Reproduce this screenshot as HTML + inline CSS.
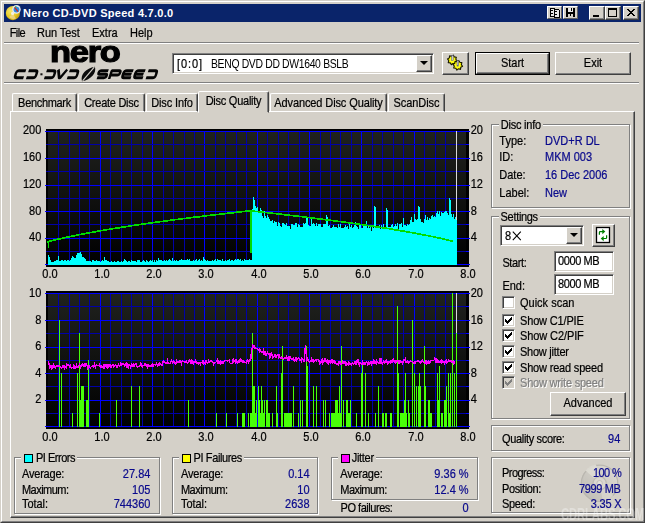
<!DOCTYPE html>
<html><head><meta charset="utf-8"><title>Nero CD-DVD Speed 4.7.0.0</title>
<style>
*{box-sizing:border-box;margin:0;padding:0}
html,body{width:645px;height:523px;overflow:hidden;background:#D4D0C8}
body{position:relative;font-family:"Liberation Sans",sans-serif;font-size:11px;color:#000;line-height:13px}
.a{position:absolute;white-space:nowrap}
.v{color:#0A0A8C}
.r{text-align:right}
.t{display:inline-block;transform:scaleY(1.1);-webkit-text-stroke:0.2px currentColor}
#win{left:0;top:0;width:645px;height:523px;border:1px solid;border-color:#D4D0C8 #404040 #404040 #D4D0C8}
#win2{left:1px;top:1px;width:643px;height:521px;border:1px solid;border-color:#FFFFFF #808080 #808080 #FFFFFF}
#title{left:4px;top:4px;width:637px;height:18px;background:#0A246A}
#ttext{left:23px;top:6px;color:#fff;font-weight:bold;font-size:11px;line-height:14px;}
.cap{top:6px;width:16px;height:14px;background:#D4D0C8;border:1px solid;border-color:#fff #404040 #404040 #fff;box-shadow:inset -1px -1px 0 #808080}
.hsep{height:2px;border-top:1px solid #808080;border-bottom:1px solid #fff}
.btn{background:#D4D0C8;border:1px solid;border-color:#fff #404040 #404040 #fff;box-shadow:inset -1px -1px 0 #808080, inset 1px 1px 0 #D4D0C8;text-align:center}
.sunk{background:#fff;border:1px solid;border-color:#808080 #fff #fff #808080;box-shadow:inset 1px 1px 0 #404040, inset -1px -1px 0 #D4D0C8}
.grp{border:1px solid #808080;box-shadow:1px 1px 0 #fff, inset 1px 1px 0 #fff}
.glab{background:#D4D0C8;padding:0 2px}
.tab{height:19px;top:93px;border:1px solid;border-color:#fff #404040 transparent #fff;border-radius:2px 2px 0 0;box-shadow:inset -1px 0 0 #808080;text-align:center;padding-top:3px}
.cb{width:13px;height:13px}
.sw{width:9px;height:9px;border:1px solid #000}
</style></head><body>
<div class="a" id="win"></div><div class="a" id="win2"></div>
<div class="a" id="title"></div>
<svg class="a" style="left:5px;top:4px" width="18" height="18" viewBox="0 0 18 18">
 <defs><radialGradient id="yg" cx="0.35" cy="0.35" r="0.75"><stop offset="0" stop-color="#F6E870"/><stop offset="0.6" stop-color="#E6C81E"/><stop offset="1" stop-color="#B89410"/></radialGradient></defs>
 <circle cx="7.9" cy="9.1" r="7.1" fill="url(#yg)"/><path d="M4,13 A6 6 0 0 0 11,14.5 L8,10 Z" fill="#F0D8A0" opacity="0.7"/><circle cx="7.6" cy="9.4" r="1.6" fill="#F4F0E0"/>
 <circle cx="11.4" cy="5.4" r="4.3" fill="#E4E6EC"/><circle cx="11.5" cy="5.6" r="2.9" fill="#2E8AE0"/><path d="M9.6,3.4 L13,7.6" stroke="#D02818" stroke-width="1.3"/><path d="M10.2,3 L11.4,2.4" stroke="#40B040" stroke-width="1.2"/>
</svg>
<div class="a" id="ttext" style="letter-spacing:0.27px;">Nero CD-DVD Speed 4.7.0.0</div>
<!-- title bar small icons -->
<div class="a" style="left:547px;top:6px;width:15px;height:13px;background:#D4D0C8;border:1px solid;border-color:#fff #606060 #606060 #fff"></div>
<div class="a" style="left:563px;top:6px;width:15px;height:13px;background:#D4D0C8;border:1px solid;border-color:#fff #606060 #606060 #fff"></div>
<svg class="a" style="left:547px;top:6px" width="32" height="13" viewBox="0 0 32 13" shape-rendering="crispEdges">
 <path d="M3 2 H7 L8 3 V10 H3 Z" fill="#E8E8E8" stroke="#000" stroke-width="1"/>
 <path d="M7 3 H11 L12 4 V11 H7 Z" fill="#E8E8E8" stroke="#000" stroke-width="1"/>
 <rect x="4" y="4" width="2" height="1" fill="#000"/><rect x="4" y="7" width="2" height="1" fill="#000"/>
 <rect x="8" y="5" width="2" height="1" fill="#000"/><rect x="8" y="8" width="2" height="1" fill="#000"/>
 <rect x="19" y="2" width="9" height="9" fill="#000"/>
 <rect x="21" y="2" width="5" height="4" fill="#E8E8E8"/><rect x="24" y="2" width="1" height="3" fill="#000"/>
 <rect x="21" y="8" width="5" height="3" fill="#D4D0C8"/><rect x="23" y="8" width="1" height="2" fill="#000"/>
</svg>
<div class="a cap" style="left:589px"><div class="a" style="left:3px;top:8px;width:6px;height:2px;background:#000"></div></div>
<div class="a cap" style="left:605px"><div class="a" style="left:2px;top:1px;width:9px;height:9px;border:1px solid #000;border-top-width:2px"></div></div>
<div class="a cap" style="left:623px"><svg class="a" style="left:3px;top:2px" width="8" height="7" viewBox="0 0 8 7"><path d="M0 0 L7 7 M1 0 L8 7 M7 0 L0 7 M8 0 L1 7" stroke="#000" stroke-width="1" shape-rendering="crispEdges"/></svg></div>
<!-- menu -->
<div class="a t" style="letter-spacing:-0.58px;left:9.7px;top:26.7px">File</div>
<div class="a t" style="letter-spacing:-0.05px;left:37px;top:26.7px">Run Test</div>
<div class="a t" style="left:92px;top:26.7px">Extra</div>
<div class="a t" style="left:130px;top:26.7px">Help</div>
<div class="a hsep" style="left:4px;top:42px;width:635px"></div>
<!-- logo -->
<div class="a" style="left:50.3px;top:36.5px;font-size:30px;line-height:30px;font-weight:bold;letter-spacing:-1.1px;-webkit-text-stroke:1.2px #000;transform:scaleX(1.148);transform-origin:0 0">nero</div>
<svg class="a" style="left:8px;top:66px" width="160" height="18" viewBox="0 0 160 18">
<g fill="none" stroke="#050505" stroke-width="2.5" stroke-linejoin="round" stroke-linecap="butt"><path transform="translate(8.2,3.5) skewX(-18) scale(1,1.2)" d="M10,1 H3.2 Q1,1 1,3 V4.8 Q1,6.8 3.2,6.8 H10"/><path transform="translate(20.0,3.5) skewX(-18) scale(1,1.2)" d="M1,1 H7.8 Q10,1 10,3 V4.8 Q10,6.8 7.8,6.8 H1"/><path transform="translate(38.0,3.5) skewX(-18) scale(1,1.2)" d="M1,1 H7.8 Q10,1 10,3 V4.8 Q10,6.8 7.8,6.8 H1"/><path transform="translate(49.2,3.5) skewX(-18) scale(1,1.2)" d="M1.2,0 L4.6,6.8 H5.8 L10,0"/><path transform="translate(60.9,3.5) skewX(-18) scale(1,1.2)" d="M1,1 H7.8 Q10,1 10,3 V4.8 Q10,6.8 7.8,6.8 H1"/><path transform="translate(90.7,3.5) skewX(-18) scale(1,1.2)" d="M10,1 H2.8 Q1,1 1,2.5 Q1,3.9 2.8,3.9 H8.2 Q10,3.9 10,5.3 Q10,6.8 8.2,6.8 H1"/><path transform="translate(103.2,3.5) skewX(-18) scale(1,1.2)" d="M1,7.9 V1 H8.2 Q10,1 10,2.7 Q10,4.5 8.2,4.5 H2"/><path transform="translate(115.6,3.5) skewX(-18) scale(1,1.2)" d="M10,1 H3.2 Q1,1 1,3 V4.8 Q1,6.8 3.2,6.8 H10 M2,3.9 H9.4"/><path transform="translate(127.6,3.5) skewX(-18) scale(1,1.2)" d="M10,1 H3.2 Q1,1 1,3 V4.8 Q1,6.8 3.2,6.8 H10 M2,3.9 H9.4"/><path transform="translate(139.7,3.5) skewX(-18) scale(1,1.2)" d="M1,1 H7.8 Q10,1 10,3 V4.8 Q10,6.8 7.8,6.8 H1"/></g>
<rect x="32.4" y="7.3" width="2.1" height="2" fill="#111"/>
<path d="M74.0,15.2 C72.0,8.5 78,2.2 86.9,0.7 C88.8,7 83,13.6 74.0,15.2 Z" fill="#0c0c0c"/>
<path d="M74.6,14.8 L86.3,1.2" stroke="#D4D0C8" stroke-width="1.2" fill="none"/>
</svg>
<!-- toolbar -->
<div class="a sunk" style="left:172px;top:53px;width:262px;height:21px"></div>
<div class="a t" style="left:177px;top:57.5px;letter-spacing:0.9px">[0:0]</div><div class="a" style="left:211px;top:57.5px;letter-spacing:-0.35px;transform:scale(0.945,1.1);transform-origin:0 50%">BENQ DVD DD DW1640 BSLB</div>
<div class="a btn" style="left:416px;top:55px;width:16px;height:17px"><div class="a" style="left:3px;top:5px;width:0;height:0;border:4px solid transparent;border-top-color:#000;border-bottom-width:0"></div></div>
<div class="a btn" style="left:442px;top:52px;width:27px;height:23px"></div>
<svg class="a" style="left:442px;top:52px" width="27" height="23" viewBox="0 0 27 23"><polygon points="15.10,8.87 13.29,9.91 13.01,11.98 10.99,11.43 9.33,12.70 8.29,10.89 6.22,10.61 6.77,8.59 5.50,6.93 7.31,5.89 7.59,3.82 9.61,4.37 11.27,3.10 12.31,4.91 14.38,5.19 13.83,7.21" fill="#F4F000" stroke="#1a1a00" stroke-width="1.1" stroke-linejoin="round"/><circle cx="10.3" cy="7.9" r="2.6" fill="#FFFF20"/><rect x="9.5" y="3.3000000000000007" width="1.7" height="5.4" fill="#C8C8D8" stroke="#505060" stroke-width="0.5"/><polygon points="20.60,14.27 18.79,15.31 18.51,17.38 16.49,16.83 14.83,18.10 13.79,16.29 11.72,16.01 12.27,13.99 11.00,12.33 12.81,11.29 13.09,9.22 15.11,9.77 16.77,8.50 17.81,10.31 19.88,10.59 19.33,12.61" fill="#F4F000" stroke="#1a1a00" stroke-width="1.1" stroke-linejoin="round"/><circle cx="15.8" cy="13.3" r="2.6" fill="#FFFF20"/><rect x="15.0" y="8.700000000000001" width="1.7" height="5.4" fill="#C8C8D8" stroke="#505060" stroke-width="0.5"/></svg>
<div class="a" style="left:475px;top:52px;width:75px;height:23px;background:#000"></div><div class="a btn" style="left:476px;top:53px;width:73px;height:21px;line-height:18px"><span class="t">Start</span></div>
<div class="a btn" style="left:555px;top:52px;width:76px;height:23px;line-height:20px"><span class="t">Exit</span></div>
<div class="a hsep" style="left:4px;top:82px;width:635px"></div>
<!-- tab panel -->
<div class="a" style="left:10px;top:111px;width:625px;height:407px;border:1px solid;border-color:#fff #404040 #404040 #fff;box-shadow:inset -1px -1px 0 #808080"></div>
<div class="a tab" style="left:12px;width:65px"><span class="t" style="letter-spacing:-0.32px;">Benchmark</span></div>
<div class="a tab" style="left:78px;width:67px"><span class="t" style="letter-spacing:-0.26px;">Create Disc</span></div>
<div class="a tab" style="left:146px;width:52px"><span class="t" style="letter-spacing:-0.12px;">Disc Info</span></div>
<div class="a tab" style="left:270px;width:117px"><span class="t" style="letter-spacing:-0.11px;">Advanced Disc Quality</span></div>
<div class="a tab" style="left:388px;width:57px"><span class="t" style="letter-spacing:-0.06px;">ScanDisc</span></div>
<div class="a tab" style="left:198px;top:91px;width:71px;height:22px;background:#D4D0C8;padding-top:3px"><span class="t" style="letter-spacing:-0.25px;">Disc Quality</span></div>
<svg id="charts" width="645" height="523" viewBox="0 0 645 523" style="position:absolute;left:0;top:0" shape-rendering="crispEdges">
<defs><linearGradient id="bg" x1="0" y1="0" x2="0" y2="1"><stop offset="0" stop-color="#20221E"/><stop offset="1" stop-color="#000000"/></linearGradient></defs>
<rect x="46" y="129" width="423" height="138" fill="#000"/>
<rect x="48" y="131" width="418" height="134" fill="url(#bg)"/>
<rect x="58" y="131" width="1" height="134" fill="#0000A8"/>
<rect x="69" y="131" width="1" height="134" fill="#0000A8"/>
<rect x="79" y="131" width="1" height="134" fill="#0000A8"/>
<rect x="89" y="131" width="1" height="134" fill="#0000A8"/>
<rect x="100" y="131" width="1" height="134" fill="#0000FF"/>
<rect x="110" y="131" width="1" height="134" fill="#0000A8"/>
<rect x="121" y="131" width="1" height="134" fill="#0000A8"/>
<rect x="131" y="131" width="1" height="134" fill="#0000A8"/>
<rect x="142" y="131" width="1" height="134" fill="#0000A8"/>
<rect x="152" y="131" width="1" height="134" fill="#0000FF"/>
<rect x="163" y="131" width="1" height="134" fill="#0000A8"/>
<rect x="173" y="131" width="1" height="134" fill="#0000A8"/>
<rect x="184" y="131" width="1" height="134" fill="#0000A8"/>
<rect x="194" y="131" width="1" height="134" fill="#0000A8"/>
<rect x="204" y="131" width="1" height="134" fill="#0000FF"/>
<rect x="215" y="131" width="1" height="134" fill="#0000A8"/>
<rect x="225" y="131" width="1" height="134" fill="#0000A8"/>
<rect x="236" y="131" width="1" height="134" fill="#0000A8"/>
<rect x="246" y="131" width="1" height="134" fill="#0000A8"/>
<rect x="257" y="131" width="1" height="134" fill="#0000FF"/>
<rect x="267" y="131" width="1" height="134" fill="#0000A8"/>
<rect x="278" y="131" width="1" height="134" fill="#0000A8"/>
<rect x="288" y="131" width="1" height="134" fill="#0000A8"/>
<rect x="299" y="131" width="1" height="134" fill="#0000A8"/>
<rect x="309" y="131" width="1" height="134" fill="#0000FF"/>
<rect x="320" y="131" width="1" height="134" fill="#0000A8"/>
<rect x="330" y="131" width="1" height="134" fill="#0000A8"/>
<rect x="340" y="131" width="1" height="134" fill="#0000A8"/>
<rect x="351" y="131" width="1" height="134" fill="#0000A8"/>
<rect x="361" y="131" width="1" height="134" fill="#0000FF"/>
<rect x="372" y="131" width="1" height="134" fill="#0000A8"/>
<rect x="382" y="131" width="1" height="134" fill="#0000A8"/>
<rect x="393" y="131" width="1" height="134" fill="#0000A8"/>
<rect x="403" y="131" width="1" height="134" fill="#0000A8"/>
<rect x="414" y="131" width="1" height="134" fill="#0000FF"/>
<rect x="424" y="131" width="1" height="134" fill="#0000A8"/>
<rect x="435" y="131" width="1" height="134" fill="#0000A8"/>
<rect x="445" y="131" width="1" height="134" fill="#0000A8"/>
<rect x="456" y="131" width="1" height="134" fill="#0000A8"/>
<rect x="45" y="131" width="425" height="1" fill="#0000FF"/>
<rect x="46" y="144" width="420" height="1" fill="#0000A8"/>
<rect x="466" y="144" width="3" height="1" fill="#0000FF"/>
<rect x="45" y="158" width="425" height="1" fill="#0000FF"/>
<rect x="46" y="171" width="420" height="1" fill="#0000A8"/>
<rect x="466" y="171" width="3" height="1" fill="#0000FF"/>
<rect x="45" y="185" width="425" height="1" fill="#0000FF"/>
<rect x="46" y="198" width="420" height="1" fill="#0000A8"/>
<rect x="466" y="198" width="3" height="1" fill="#0000FF"/>
<rect x="45" y="211" width="425" height="1" fill="#0000FF"/>
<rect x="46" y="224" width="420" height="1" fill="#0000A8"/>
<rect x="466" y="224" width="3" height="1" fill="#0000FF"/>
<rect x="45" y="238" width="425" height="1" fill="#0000FF"/>
<rect x="46" y="251" width="420" height="1" fill="#0000A8"/>
<rect x="466" y="251" width="3" height="1" fill="#0000FF"/>
<rect x="45" y="264" width="425" height="1" fill="#0000FF"/>
<rect x="456" y="131" width="1" height="134" fill="#D8D8D8"/>
<path d="M48,265 L48,255 L49,255 L49,257 L50,257 L50,260 L51,260 L51,262 L52,262 L52,262 L53,262 L53,262 L54,262 L54,261 L55,261 L55,261 L56,261 L56,260 L57,260 L57,260 L58,260 L58,256 L59,256 L59,261 L60,261 L60,261 L61,261 L61,260 L62,260 L62,260 L63,260 L63,261 L64,261 L64,260 L65,260 L65,260 L66,260 L66,261 L67,261 L67,260 L68,260 L68,260 L69,260 L69,261 L70,261 L70,260 L71,260 L71,258 L72,258 L72,256 L73,256 L73,257 L74,257 L74,258 L75,258 L75,258 L76,258 L76,255 L77,255 L77,253 L78,253 L78,253 L79,253 L79,253 L80,253 L80,252 L81,252 L81,254 L82,254 L82,257 L83,257 L83,257 L84,257 L84,258 L85,258 L85,259 L86,259 L86,261 L87,261 L87,261 L88,261 L88,261 L89,261 L89,261 L90,261 L90,261 L91,261 L91,262 L92,262 L92,260 L93,260 L93,260 L94,260 L94,261 L95,261 L95,261 L96,261 L96,260 L97,260 L97,261 L98,261 L98,261 L99,261 L99,261 L100,261 L100,262 L101,262 L101,261 L102,261 L102,260 L103,260 L103,261 L104,261 L104,257 L105,257 L105,260 L106,260 L106,260 L107,260 L107,261 L108,261 L108,261 L109,261 L109,262 L110,262 L110,262 L111,262 L111,261 L112,261 L112,262 L113,262 L113,262 L114,262 L114,261 L115,261 L115,262 L116,262 L116,262 L117,262 L117,261 L118,261 L118,261 L119,261 L119,262 L120,262 L120,262 L121,262 L121,261 L122,261 L122,262 L123,262 L123,261 L124,261 L124,259 L125,259 L125,260 L126,260 L126,261 L127,261 L127,262 L128,262 L128,261 L129,261 L129,261 L130,261 L130,262 L131,262 L131,260 L132,260 L132,261 L133,261 L133,261 L134,261 L134,261 L135,261 L135,261 L136,261 L136,262 L137,262 L137,260 L138,260 L138,260 L139,260 L139,260 L140,260 L140,262 L141,262 L141,262 L142,262 L142,261 L143,261 L143,260 L144,260 L144,261 L145,261 L145,262 L146,262 L146,260 L147,260 L147,261 L148,261 L148,262 L149,262 L149,261 L150,261 L150,260 L151,260 L151,261 L152,261 L152,260 L153,260 L153,262 L154,262 L154,260 L155,260 L155,262 L156,262 L156,260 L157,260 L157,261 L158,261 L158,258 L159,258 L159,260 L160,260 L160,260 L161,260 L161,260 L162,260 L162,261 L163,261 L163,261 L164,261 L164,260 L165,260 L165,261 L166,261 L166,260 L167,260 L167,261 L168,261 L168,260 L169,260 L169,259 L170,259 L170,260 L171,260 L171,261 L172,261 L172,258 L173,258 L173,261 L174,261 L174,260 L175,260 L175,261 L176,261 L176,260 L177,260 L177,261 L178,261 L178,261 L179,261 L179,260 L180,260 L180,260 L181,260 L181,259 L182,259 L182,260 L183,260 L183,260 L184,260 L184,260 L185,260 L185,260 L186,260 L186,260 L187,260 L187,259 L188,259 L188,260 L189,260 L189,259 L190,259 L190,261 L191,261 L191,261 L192,261 L192,261 L193,261 L193,260 L194,260 L194,261 L195,261 L195,260 L196,260 L196,259 L197,259 L197,261 L198,261 L198,260 L199,260 L199,259 L200,259 L200,261 L201,261 L201,260 L202,260 L202,261 L203,261 L203,257 L204,257 L204,259 L205,259 L205,260 L206,260 L206,261 L207,261 L207,260 L208,260 L208,261 L209,261 L209,261 L210,261 L210,261 L211,261 L211,261 L212,261 L212,260 L213,260 L213,261 L214,261 L214,260 L215,260 L215,259 L216,259 L216,261 L217,261 L217,259 L218,259 L218,260 L219,260 L219,260 L220,260 L220,260 L221,260 L221,261 L222,261 L222,259 L223,259 L223,261 L224,261 L224,261 L225,261 L225,260 L226,260 L226,261 L227,261 L227,260 L228,260 L228,260 L229,260 L229,259 L230,259 L230,261 L231,261 L231,260 L232,260 L232,260 L233,260 L233,261 L234,261 L234,260 L235,260 L235,259 L236,259 L236,260 L237,260 L237,259 L238,259 L238,259 L239,259 L239,260 L240,260 L240,259 L241,259 L241,261 L242,261 L242,260 L243,260 L243,261 L244,261 L244,259 L245,259 L245,260 L246,260 L246,260 L247,260 L247,260 L248,260 L248,260 L249,260 L249,259 L250,259 L250,260 L251,260 L251,260 L252,260 L252,209 L253,209 L253,197 L254,197 L254,200 L255,200 L255,206 L256,206 L256,208 L257,208 L257,207 L258,207 L258,212 L259,212 L259,212 L260,212 L260,208 L261,208 L261,210 L262,210 L262,216 L263,216 L263,218 L264,218 L264,211 L265,211 L265,216 L266,216 L266,218 L267,218 L267,215 L268,215 L268,217 L269,217 L269,219 L270,219 L270,221 L271,221 L271,221 L272,221 L272,220 L273,220 L273,223 L274,223 L274,221 L275,221 L275,222 L276,222 L276,222 L277,222 L277,226 L278,226 L278,222 L279,222 L279,223 L280,223 L280,226 L281,226 L281,227 L282,227 L282,223 L283,223 L283,223 L284,223 L284,224 L285,224 L285,225 L286,225 L286,223 L287,223 L287,226 L288,226 L288,226 L289,226 L289,226 L290,226 L290,229 L291,229 L291,224 L292,224 L292,224 L293,224 L293,225 L294,225 L294,225 L295,225 L295,223 L296,223 L296,223 L297,223 L297,227 L298,227 L298,224 L299,224 L299,225 L300,225 L300,227 L301,227 L301,227 L302,227 L302,227 L303,227 L303,223 L304,223 L304,224 L305,224 L305,223 L306,223 L306,216 L307,216 L307,218 L308,218 L308,225 L309,225 L309,226 L310,226 L310,226 L311,226 L311,218 L312,218 L312,224 L313,224 L313,223 L314,223 L314,224 L315,224 L315,226 L316,226 L316,223 L317,223 L317,226 L318,226 L318,224 L319,224 L319,224 L320,224 L320,224 L321,224 L321,227 L322,227 L322,227 L323,227 L323,224 L324,224 L324,224 L325,224 L325,224 L326,224 L326,215 L327,215 L327,217 L328,217 L328,226 L329,226 L329,225 L330,225 L330,228 L331,228 L331,228 L332,228 L332,227 L333,227 L333,225 L334,225 L334,227 L335,227 L335,227 L336,227 L336,227 L337,227 L337,228 L338,228 L338,224 L339,224 L339,227 L340,227 L340,224 L341,224 L341,228 L342,228 L342,228 L343,228 L343,228 L344,228 L344,227 L345,227 L345,225 L346,225 L346,227 L347,227 L347,226 L348,226 L348,229 L349,229 L349,224 L350,224 L350,227 L351,227 L351,225 L352,225 L352,228 L353,228 L353,227 L354,227 L354,225 L355,225 L355,222 L356,222 L356,226 L357,226 L357,227 L358,227 L358,229 L359,229 L359,225 L360,225 L360,225 L361,225 L361,228 L362,228 L362,228 L363,228 L363,226 L364,226 L364,226 L365,226 L365,225 L366,225 L366,221 L367,221 L367,228 L368,228 L368,226 L369,226 L369,228 L370,228 L370,226 L371,226 L371,231 L372,231 L372,226 L373,226 L373,228 L374,228 L374,206 L375,206 L375,207 L376,207 L376,226 L377,226 L377,227 L378,227 L378,228 L379,228 L379,225 L380,225 L380,229 L381,229 L381,225 L382,225 L382,227 L383,227 L383,224 L384,224 L384,228 L385,228 L385,227 L386,227 L386,208 L387,208 L387,210 L388,210 L388,227 L389,227 L389,227 L390,227 L390,227 L391,227 L391,225 L392,225 L392,224 L393,224 L393,227 L394,227 L394,226 L395,226 L395,224 L396,224 L396,226 L397,226 L397,223 L398,223 L398,230 L399,230 L399,224 L400,224 L400,224 L401,224 L401,223 L402,223 L402,227 L403,227 L403,218 L404,218 L404,225 L405,225 L405,225 L406,225 L406,226 L407,226 L407,224 L408,224 L408,225 L409,225 L409,224 L410,224 L410,220 L411,220 L411,217 L412,217 L412,222 L413,222 L413,222 L414,222 L414,214 L415,214 L415,219 L416,219 L416,220 L417,220 L417,219 L418,219 L418,206 L419,206 L419,207 L420,207 L420,219 L421,219 L421,222 L422,222 L422,222 L423,222 L423,223 L424,223 L424,219 L425,219 L425,215 L426,215 L426,220 L427,220 L427,217 L428,217 L428,220 L429,220 L429,218 L430,218 L430,219 L431,219 L431,216 L432,216 L432,215 L433,215 L433,217 L434,217 L434,216 L435,216 L435,217 L436,217 L436,213 L437,213 L437,211 L438,211 L438,214 L439,214 L439,211 L440,211 L440,216 L441,216 L441,212 L442,212 L442,213 L443,213 L443,213 L444,213 L444,212 L445,212 L445,211 L446,211 L446,211 L447,211 L447,213 L448,213 L448,215 L449,215 L449,198 L450,198 L450,200 L451,200 L451,214 L452,214 L452,217 L453,217 L453,214 L454,214 L454,219 L455,219 L455,217 L456,217 L456,220 L457,220 L457,265 Z" fill="#00FFFF" stroke="none"/>
<path d="M48.5,248.4 L48.5,241.7 L47.6,241.7 L50.2,241.1 L52.8,240.4 L55.4,239.8 L58.1,239.2 L60.7,238.6 L63.3,238.0 L65.9,237.4 L68.5,236.9 L71.1,236.3 L73.8,235.8 L76.4,235.3 L79.0,234.7 L81.6,234.2 L84.2,233.7 L86.8,233.2 L89.4,232.8 L92.1,232.3 L94.7,231.8 L97.3,231.4 L99.9,230.9 L102.5,230.4 L105.1,230.0 L107.7,229.6 L110.4,229.1 L113.0,228.7 L115.6,228.3 L118.2,227.9 L120.8,227.4 L123.4,227.0 L126.1,226.6 L128.7,226.2 L131.3,225.8 L133.9,225.4 L136.5,225.1 L139.1,224.7 L141.7,224.3 L144.4,223.9 L147.0,223.5 L149.6,223.2 L152.2,222.8 L154.8,222.4 L157.4,222.1 L160.0,221.7 L162.7,221.4 L165.3,221.0 L167.9,220.7 L170.5,220.3 L173.1,220.0 L175.7,219.6 L178.3,219.3 L181.0,219.0 L183.6,218.6 L186.2,218.3 L188.8,218.0 L191.4,217.6 L194.0,217.3 L196.7,217.0 L199.3,216.7 L201.9,216.4 L204.5,216.0 L207.1,215.7 L209.7,215.4 L212.3,215.1 L215.0,214.8 L217.6,214.5 L220.2,214.2 L222.8,213.9 L225.4,213.6 L228.0,213.3 L230.6,213.0 L233.3,212.7 L235.9,212.4 L238.5,212.1 L241.1,211.8 L243.7,211.5 L246.3,211.2 L249.0,211.0 L251.6,211.0 L254.2,211.3 L256.8,211.5 L259.4,211.8 L262.0,212.1 L264.6,212.4 L267.3,212.7 L269.9,213.0 L272.5,213.3 L275.1,213.6 L277.7,213.9 L280.3,214.2 L282.9,214.5 L285.6,214.8 L288.2,215.1 L290.8,215.4 L293.4,215.7 L296.0,216.0 L298.6,216.3 L301.3,216.6 L303.9,217.0 L306.5,217.3 L309.1,217.6 L311.7,217.9 L314.3,218.2 L316.9,218.6 L319.6,218.9 L322.2,219.2 L324.8,219.6 L327.4,219.9 L330.0,220.2 L332.6,220.6 L335.2,220.9 L337.9,221.3 L340.5,221.6 L343.1,222.0 L345.7,222.3 L348.3,222.7 L350.9,223.1 L353.6,223.4 L356.2,223.8 L358.8,224.2 L361.4,224.5 L364.0,224.9 L366.6,225.3 L369.2,225.7 L371.9,226.1 L374.5,226.5 L377.1,226.9 L379.7,227.3 L382.3,227.7 L384.9,228.1 L387.5,228.5 L390.2,228.9 L392.8,229.4 L395.4,229.8 L398.0,230.2 L400.6,230.7 L403.2,231.1 L405.9,231.6 L408.5,232.0 L411.1,232.5 L413.7,233.0 L416.3,233.5 L418.9,234.0 L421.5,234.5 L424.2,235.0 L426.8,235.5 L429.4,236.0 L432.0,236.5 L434.6,237.1 L437.2,237.6 L439.8,238.2 L442.5,238.8 L445.1,239.4 L447.7,240.0 L450.3,240.6 L452.9,241.3 " fill="none" stroke="#00DC00" stroke-width="1.7" stroke-linejoin="round"/><rect x="250" y="210.7" width="2" height="42.4" fill="#00DC00"/>
<rect x="46" y="291" width="423" height="138" fill="#000"/>
<rect x="48" y="293" width="418" height="134" fill="url(#bg)"/>
<rect x="58" y="293" width="1" height="134" fill="#0000A8"/>
<rect x="69" y="293" width="1" height="134" fill="#0000A8"/>
<rect x="79" y="293" width="1" height="134" fill="#0000A8"/>
<rect x="89" y="293" width="1" height="134" fill="#0000A8"/>
<rect x="100" y="293" width="1" height="134" fill="#0000FF"/>
<rect x="110" y="293" width="1" height="134" fill="#0000A8"/>
<rect x="121" y="293" width="1" height="134" fill="#0000A8"/>
<rect x="131" y="293" width="1" height="134" fill="#0000A8"/>
<rect x="142" y="293" width="1" height="134" fill="#0000A8"/>
<rect x="152" y="293" width="1" height="134" fill="#0000FF"/>
<rect x="163" y="293" width="1" height="134" fill="#0000A8"/>
<rect x="173" y="293" width="1" height="134" fill="#0000A8"/>
<rect x="184" y="293" width="1" height="134" fill="#0000A8"/>
<rect x="194" y="293" width="1" height="134" fill="#0000A8"/>
<rect x="204" y="293" width="1" height="134" fill="#0000FF"/>
<rect x="215" y="293" width="1" height="134" fill="#0000A8"/>
<rect x="225" y="293" width="1" height="134" fill="#0000A8"/>
<rect x="236" y="293" width="1" height="134" fill="#0000A8"/>
<rect x="246" y="293" width="1" height="134" fill="#0000A8"/>
<rect x="257" y="293" width="1" height="134" fill="#0000FF"/>
<rect x="267" y="293" width="1" height="134" fill="#0000A8"/>
<rect x="278" y="293" width="1" height="134" fill="#0000A8"/>
<rect x="288" y="293" width="1" height="134" fill="#0000A8"/>
<rect x="299" y="293" width="1" height="134" fill="#0000A8"/>
<rect x="309" y="293" width="1" height="134" fill="#0000FF"/>
<rect x="320" y="293" width="1" height="134" fill="#0000A8"/>
<rect x="330" y="293" width="1" height="134" fill="#0000A8"/>
<rect x="340" y="293" width="1" height="134" fill="#0000A8"/>
<rect x="351" y="293" width="1" height="134" fill="#0000A8"/>
<rect x="361" y="293" width="1" height="134" fill="#0000FF"/>
<rect x="372" y="293" width="1" height="134" fill="#0000A8"/>
<rect x="382" y="293" width="1" height="134" fill="#0000A8"/>
<rect x="393" y="293" width="1" height="134" fill="#0000A8"/>
<rect x="403" y="293" width="1" height="134" fill="#0000A8"/>
<rect x="414" y="293" width="1" height="134" fill="#0000FF"/>
<rect x="424" y="293" width="1" height="134" fill="#0000A8"/>
<rect x="435" y="293" width="1" height="134" fill="#0000A8"/>
<rect x="445" y="293" width="1" height="134" fill="#0000A8"/>
<rect x="456" y="293" width="1" height="134" fill="#0000A8"/>
<rect x="45" y="293" width="425" height="1" fill="#0000FF"/>
<rect x="46" y="306" width="420" height="1" fill="#0000A8"/>
<rect x="466" y="306" width="3" height="1" fill="#0000FF"/>
<rect x="45" y="320" width="425" height="1" fill="#0000FF"/>
<rect x="46" y="333" width="420" height="1" fill="#0000A8"/>
<rect x="466" y="333" width="3" height="1" fill="#0000FF"/>
<rect x="45" y="347" width="425" height="1" fill="#0000FF"/>
<rect x="46" y="360" width="420" height="1" fill="#0000A8"/>
<rect x="466" y="360" width="3" height="1" fill="#0000FF"/>
<rect x="45" y="373" width="425" height="1" fill="#0000FF"/>
<rect x="46" y="386" width="420" height="1" fill="#0000A8"/>
<rect x="466" y="386" width="3" height="1" fill="#0000FF"/>
<rect x="45" y="400" width="425" height="1" fill="#0000FF"/>
<rect x="46" y="413" width="420" height="1" fill="#0000A8"/>
<rect x="466" y="413" width="3" height="1" fill="#0000FF"/>
<rect x="45" y="426" width="425" height="1" fill="#0000FF"/>
<rect x="456" y="293" width="1" height="134" fill="#D8D8D8"/>
<rect x="58.8" y="319.7" width="1" height="107.3" fill="#48FF08"/>
<rect x="60.8" y="373.0" width="1" height="54.0" fill="#48FF08"/>
<rect x="72.1" y="413.1" width="1" height="13.9" fill="#48FF08"/>
<rect x="76.9" y="373.0" width="1" height="54.0" fill="#48FF08"/>
<rect x="78.8" y="333.0" width="1.3" height="94.0" fill="#48FF08"/>
<rect x="81.2" y="386.4" width="1.5" height="40.6" fill="#48FF08"/>
<rect x="83.1" y="386.4" width="1" height="40.6" fill="#48FF08"/>
<rect x="79.5" y="399.7" width="2" height="27.3" fill="#48FF08"/>
<rect x="87.5" y="359.7" width="1" height="67.3" fill="#48FF08"/>
<rect x="86.3" y="399.7" width="1.3" height="27.3" fill="#48FF08"/>
<rect x="99.1" y="413.1" width="1" height="13.9" fill="#48FF08"/>
<rect x="116.0" y="399.7" width="1" height="27.3" fill="#48FF08"/>
<rect x="131.0" y="386.4" width="1" height="40.6" fill="#48FF08"/>
<rect x="139.0" y="386.4" width="1" height="40.6" fill="#48FF08"/>
<rect x="187.8" y="399.7" width="1" height="27.3" fill="#48FF08"/>
<rect x="216.0" y="413.1" width="1" height="13.9" fill="#48FF08"/>
<rect x="226.1" y="413.1" width="1" height="13.9" fill="#48FF08"/>
<rect x="237.0" y="413.1" width="1" height="13.9" fill="#48FF08"/>
<rect x="242.3" y="413.1" width="1.3" height="13.9" fill="#48FF08"/>
<rect x="247.5" y="413.1" width="1" height="13.9" fill="#48FF08"/>
<rect x="251.8" y="333.0" width="1.2" height="94.0" fill="#48FF08"/>
<rect x="253.0" y="386.4" width="2" height="40.6" fill="#48FF08"/>
<rect x="255.8" y="399.7" width="1.5" height="27.3" fill="#48FF08"/>
<rect x="258.0" y="386.4" width="1" height="40.6" fill="#48FF08"/>
<rect x="260.5" y="386.4" width="1" height="40.6" fill="#48FF08"/>
<rect x="263.5" y="399.7" width="1" height="27.3" fill="#48FF08"/>
<rect x="266.5" y="399.7" width="1" height="27.3" fill="#48FF08"/>
<rect x="275.5" y="386.4" width="1" height="40.6" fill="#48FF08"/>
<rect x="281.0" y="373.0" width="1" height="54.0" fill="#48FF08"/>
<rect x="281.9" y="346.4" width="1.2" height="80.6" fill="#48FF08"/>
<rect x="293.1" y="386.4" width="1" height="40.6" fill="#48FF08"/>
<rect x="300.0" y="399.7" width="1" height="27.3" fill="#48FF08"/>
<rect x="302.0" y="399.7" width="1" height="27.3" fill="#48FF08"/>
<rect x="305.9" y="346.4" width="1.2" height="80.6" fill="#48FF08"/>
<rect x="307.3" y="366.4" width="1" height="60.6" fill="#48FF08"/>
<rect x="313.3" y="386.4" width="1" height="40.6" fill="#48FF08"/>
<rect x="316.1" y="386.4" width="1" height="40.6" fill="#48FF08"/>
<rect x="325.0" y="399.7" width="1" height="27.3" fill="#48FF08"/>
<rect x="334.5" y="399.7" width="1" height="27.3" fill="#48FF08"/>
<rect x="336.2" y="399.7" width="1.5" height="27.3" fill="#48FF08"/>
<rect x="339.0" y="386.4" width="1" height="40.6" fill="#48FF08"/>
<rect x="341.0" y="346.4" width="1.2" height="80.6" fill="#48FF08"/>
<rect x="343.0" y="399.7" width="1" height="27.3" fill="#48FF08"/>
<rect x="345.5" y="399.7" width="1" height="27.3" fill="#48FF08"/>
<rect x="348.0" y="413.1" width="2" height="13.9" fill="#48FF08"/>
<rect x="360.5" y="373.0" width="1" height="54.0" fill="#48FF08"/>
<rect x="361.8" y="359.7" width="1" height="67.3" fill="#48FF08"/>
<rect x="364.5" y="373.0" width="1" height="54.0" fill="#48FF08"/>
<rect x="367.5" y="413.1" width="1" height="13.9" fill="#48FF08"/>
<rect x="377.8" y="386.4" width="1" height="40.6" fill="#48FF08"/>
<rect x="382.5" y="413.1" width="1" height="13.9" fill="#48FF08"/>
<rect x="385.2" y="413.1" width="1.5" height="13.9" fill="#48FF08"/>
<rect x="396.7" y="306.3" width="1.2" height="120.7" fill="#48FF08"/>
<rect x="398.1" y="373.0" width="1" height="54.0" fill="#48FF08"/>
<rect x="404.8" y="373.0" width="1" height="54.0" fill="#48FF08"/>
<rect x="407.5" y="399.7" width="1" height="27.3" fill="#48FF08"/>
<rect x="411.6" y="319.7" width="1.2" height="107.3" fill="#48FF08"/>
<rect x="413.7" y="373.0" width="1" height="54.0" fill="#48FF08"/>
<rect x="415.8" y="386.4" width="1" height="40.6" fill="#48FF08"/>
<rect x="419.0" y="373.0" width="1" height="54.0" fill="#48FF08"/>
<rect x="423.7" y="346.4" width="1.2" height="80.6" fill="#48FF08"/>
<rect x="437.1" y="373.0" width="1" height="54.0" fill="#48FF08"/>
<rect x="439.0" y="366.4" width="1" height="60.6" fill="#48FF08"/>
<rect x="448.0" y="373.0" width="1" height="54.0" fill="#48FF08"/>
<rect x="450.0" y="373.0" width="1" height="54.0" fill="#48FF08"/>
<rect x="451.9" y="293.0" width="1.2" height="134.0" fill="#48FF08"/>
<rect x="454.1" y="373.0" width="1" height="54.0" fill="#48FF08"/>
<rect x="455.7" y="333.0" width="1.4" height="94.0" fill="#48FF08"/>
<rect x="443.5" y="399.7" width="1" height="27.3" fill="#48FF08"/>
<rect x="445.5" y="386.4" width="1" height="40.6" fill="#48FF08"/>
<rect x="430.0" y="413.1" width="2" height="13.9" fill="#48FF08"/>
<rect x="427.5" y="399.7" width="1" height="27.3" fill="#48FF08"/>
<rect x="250.0" y="413.1" width="1" height="13.9" fill="#48FF08"/>
<rect x="251.0" y="413.1" width="1" height="13.9" fill="#48FF08"/>
<rect x="253.0" y="413.1" width="1" height="13.9" fill="#48FF08"/>
<rect x="254.0" y="413.1" width="1" height="13.9" fill="#48FF08"/>
<rect x="255.0" y="413.1" width="1" height="13.9" fill="#48FF08"/>
<rect x="256.0" y="413.1" width="1" height="13.9" fill="#48FF08"/>
<rect x="258.0" y="413.1" width="1" height="13.9" fill="#48FF08"/>
<rect x="260.0" y="413.1" width="1" height="13.9" fill="#48FF08"/>
<rect x="261.0" y="413.1" width="1" height="13.9" fill="#48FF08"/>
<rect x="262.0" y="413.1" width="1" height="13.9" fill="#48FF08"/>
<rect x="263.0" y="413.1" width="1" height="13.9" fill="#48FF08"/>
<rect x="264.0" y="413.1" width="1" height="13.9" fill="#48FF08"/>
<rect x="266.0" y="413.1" width="1" height="13.9" fill="#48FF08"/>
<rect x="267.0" y="413.1" width="1" height="13.9" fill="#48FF08"/>
<rect x="268.0" y="413.1" width="1" height="13.9" fill="#48FF08"/>
<rect x="269.0" y="413.1" width="1" height="13.9" fill="#48FF08"/>
<rect x="284.0" y="413.1" width="1" height="13.9" fill="#48FF08"/>
<rect x="285.0" y="413.1" width="1" height="13.9" fill="#48FF08"/>
<rect x="286.0" y="413.1" width="1" height="13.9" fill="#48FF08"/>
<rect x="287.0" y="413.1" width="1" height="13.9" fill="#48FF08"/>
<rect x="288.0" y="413.1" width="1" height="13.9" fill="#48FF08"/>
<rect x="289.0" y="413.1" width="1" height="13.9" fill="#48FF08"/>
<rect x="290.0" y="413.1" width="1" height="13.9" fill="#48FF08"/>
<rect x="291.0" y="413.1" width="1" height="13.9" fill="#48FF08"/>
<rect x="328.5" y="413.1" width="1" height="13.9" fill="#48FF08"/>
<rect x="330.5" y="413.1" width="1" height="13.9" fill="#48FF08"/>
<rect x="331.5" y="413.1" width="1" height="13.9" fill="#48FF08"/>
<rect x="332.5" y="413.1" width="1" height="13.9" fill="#48FF08"/>
<rect x="334.0" y="413.1" width="1" height="13.9" fill="#48FF08"/>
<rect x="335.0" y="413.1" width="1" height="13.9" fill="#48FF08"/>
<rect x="336.0" y="413.1" width="1" height="13.9" fill="#48FF08"/>
<rect x="337.0" y="413.1" width="1" height="13.9" fill="#48FF08"/>
<rect x="338.0" y="413.1" width="1" height="13.9" fill="#48FF08"/>
<rect x="339.0" y="413.1" width="1" height="13.9" fill="#48FF08"/>
<rect x="340.0" y="413.1" width="1" height="13.9" fill="#48FF08"/>
<rect x="341.0" y="413.1" width="1" height="13.9" fill="#48FF08"/>
<rect x="347.5" y="413.1" width="1" height="13.9" fill="#48FF08"/>
<rect x="348.5" y="413.1" width="1" height="13.9" fill="#48FF08"/>
<rect x="349.5" y="413.1" width="1" height="13.9" fill="#48FF08"/>
<rect x="367.5" y="413.1" width="1" height="13.9" fill="#48FF08"/>
<rect x="374.5" y="413.1" width="1" height="13.9" fill="#48FF08"/>
<rect x="381.5" y="413.1" width="1" height="13.9" fill="#48FF08"/>
<rect x="382.5" y="413.1" width="1" height="13.9" fill="#48FF08"/>
<rect x="389.5" y="413.1" width="1" height="13.9" fill="#48FF08"/>
<rect x="390.5" y="413.1" width="1" height="13.9" fill="#48FF08"/>
<rect x="398.0" y="413.1" width="1" height="13.9" fill="#48FF08"/>
<rect x="400.0" y="413.1" width="1" height="13.9" fill="#48FF08"/>
<rect x="401.0" y="413.1" width="1" height="13.9" fill="#48FF08"/>
<rect x="402.0" y="413.1" width="1" height="13.9" fill="#48FF08"/>
<rect x="403.0" y="413.1" width="1" height="13.9" fill="#48FF08"/>
<rect x="404.0" y="413.1" width="1" height="13.9" fill="#48FF08"/>
<rect x="405.0" y="413.1" width="1" height="13.9" fill="#48FF08"/>
<rect x="406.0" y="413.1" width="1" height="13.9" fill="#48FF08"/>
<rect x="408.0" y="413.1" width="1" height="13.9" fill="#48FF08"/>
<rect x="409.0" y="413.1" width="1" height="13.9" fill="#48FF08"/>
<rect x="436.5" y="413.1" width="1" height="13.9" fill="#48FF08"/>
<rect x="437.5" y="413.1" width="1" height="13.9" fill="#48FF08"/>
<rect x="440.5" y="413.1" width="1" height="13.9" fill="#48FF08"/>
<rect x="441.5" y="413.1" width="1" height="13.9" fill="#48FF08"/>
<rect x="443.5" y="413.1" width="1" height="13.9" fill="#48FF08"/>
<rect x="445.5" y="413.1" width="1" height="13.9" fill="#48FF08"/>
<rect x="447.5" y="413.1" width="1" height="13.9" fill="#48FF08"/>
<rect x="448.5" y="413.1" width="1" height="13.9" fill="#48FF08"/>
<rect x="449.5" y="413.1" width="1" height="13.9" fill="#48FF08"/>
<rect x="241.5" y="413.1" width="1" height="13.9" fill="#48FF08"/>
<rect x="244.0" y="413.1" width="1" height="13.9" fill="#48FF08"/>
<rect x="251.5" y="399.7" width="3" height="27.3" fill="#48FF08"/>
<rect x="258.0" y="399.7" width="1.6" height="27.3" fill="#48FF08"/>
<rect x="261.4" y="399.7" width="1.6" height="27.3" fill="#48FF08"/>
<rect x="266.2" y="399.7" width="1" height="27.3" fill="#48FF08"/>
<rect x="252.4" y="386.4" width="1.5" height="40.6" fill="#48FF08"/>
<rect x="258.0" y="386.4" width="1" height="40.6" fill="#48FF08"/>
<rect x="271.5" y="413.1" width="1" height="13.9" fill="#48FF08"/>
<rect x="276.9" y="413.1" width="1" height="13.9" fill="#48FF08"/>
<rect x="298.3" y="413.1" width="1" height="13.9" fill="#48FF08"/>
<rect x="301.9" y="399.7" width="1" height="27.3" fill="#48FF08"/>
<rect x="307.3" y="413.1" width="1" height="13.9" fill="#48FF08"/>
<rect x="323.3" y="399.7" width="1" height="27.3" fill="#48FF08"/>
<rect x="335.8" y="399.7" width="1" height="27.3" fill="#48FF08"/>
<rect x="339.4" y="399.7" width="1" height="27.3" fill="#48FF08"/>
<rect x="346.5" y="399.7" width="1" height="27.3" fill="#48FF08"/>
<rect x="350.0" y="399.7" width="1" height="27.3" fill="#48FF08"/>
<rect x="355.5" y="413.1" width="1" height="13.9" fill="#48FF08"/>
<rect x="403.5" y="399.7" width="1" height="27.3" fill="#48FF08"/>
<rect x="417.8" y="386.4" width="1" height="40.6" fill="#48FF08"/>
<rect x="419.5" y="386.4" width="1" height="40.6" fill="#48FF08"/>
<rect x="424.9" y="386.4" width="1" height="40.6" fill="#48FF08"/>
<rect x="428.5" y="399.7" width="1" height="27.3" fill="#48FF08"/>
<rect x="437.5" y="399.7" width="1" height="27.3" fill="#48FF08"/>
<rect x="444.5" y="399.7" width="1" height="27.3" fill="#48FF08"/>
<path d="M48.5,361.1 L49.2,365.2 L49.9,367.9 L50.6,366.6 L51.3,368.3 L52.0,365.6 L52.7,368.6 L53.4,363.1 L54.1,368.3 L54.8,366.4 L55.5,367.4 L56.2,366.2 L56.9,365.9 L57.6,365.8 L58.3,366.6 L59.0,365.4 L59.7,366.7 L60.4,366.6 L61.1,368.1 L61.8,368.3 L62.5,365.3 L63.2,368.3 L63.9,365.2 L64.6,368.4 L65.3,367.0 L66.0,368.0 L66.7,364.2 L67.4,365.0 L68.1,364.3 L68.8,364.3 L69.5,367.8 L70.2,364.4 L70.9,367.0 L71.6,367.8 L72.3,367.3 L73.0,367.9 L73.7,364.4 L74.4,367.3 L75.1,368.6 L75.8,367.7 L76.5,365.4 L77.2,367.7 L77.9,367.9 L78.6,365.6 L79.3,364.5 L80.0,365.8 L80.7,367.9 L81.4,365.6 L82.1,364.8 L82.8,364.0 L83.5,366.7 L84.2,366.4 L84.9,362.8 L85.6,367.2 L86.3,363.9 L87.0,365.3 L87.7,370.0 L88.4,365.5 L89.1,366.0 L89.8,367.6 L90.5,368.0 L91.2,366.6 L91.9,366.6 L92.6,365.6 L93.3,367.3 L94.0,366.1 L94.7,364.0 L95.4,367.5 L96.1,365.3 L96.8,364.7 L97.5,365.7 L98.2,365.6 L98.9,365.2 L99.6,363.9 L100.3,367.0 L101.0,367.8 L101.7,366.2 L102.4,367.8 L103.1,367.9 L103.8,363.9 L104.5,367.1 L105.2,365.7 L105.9,364.4 L106.6,366.6 L107.3,367.7 L108.0,364.5 L108.7,367.9 L109.4,364.6 L110.1,364.6 L110.8,366.9 L111.5,367.5 L112.2,364.6 L112.9,364.1 L113.6,366.7 L114.3,365.9 L115.0,365.5 L115.7,365.0 L116.4,366.8 L117.1,367.7 L117.8,366.7 L118.5,363.6 L119.2,366.3 L119.9,366.3 L120.6,363.7 L121.3,364.7 L122.0,363.4 L122.7,364.0 L123.4,363.9 L124.1,364.5 L124.8,366.3 L125.5,364.9 L126.2,363.6 L126.9,367.5 L127.6,363.5 L128.3,369.4 L129.0,364.5 L129.7,364.5 L130.4,367.3 L131.1,365.9 L131.8,363.9 L132.5,367.2 L133.2,363.5 L133.9,367.0 L134.6,364.6 L135.3,363.9 L136.0,363.8 L136.7,366.2 L137.4,367.0 L138.1,366.5 L138.8,366.7 L139.5,366.2 L140.2,365.8 L140.9,363.1 L141.6,363.6 L142.3,367.2 L143.0,365.4 L143.7,365.8 L144.4,365.0 L145.1,363.5 L145.8,363.7 L146.5,367.3 L147.2,363.9 L147.9,367.3 L148.6,365.1 L149.3,366.4 L150.0,365.7 L150.7,366.1 L151.4,366.0 L152.1,364.1 L152.8,366.7 L153.5,366.8 L154.2,364.1 L154.9,364.4 L155.6,365.4 L156.3,363.2 L157.0,364.6 L157.7,366.0 L158.4,364.9 L159.1,363.2 L159.8,365.1 L160.5,363.8 L161.2,364.2 L161.9,365.6 L162.6,363.3 L163.3,361.2 L164.0,362.5 L164.7,361.9 L165.4,362.4 L166.1,363.4 L166.8,363.1 L167.5,360.7 L168.2,363.7 L168.9,363.0 L169.6,363.7 L170.3,363.6 L171.0,361.2 L171.7,360.2 L172.4,362.7 L173.1,360.9 L173.8,362.5 L174.5,361.6 L175.2,363.5 L175.9,364.2 L176.6,360.9 L177.3,362.2 L178.0,362.3 L178.7,361.7 L179.4,361.1 L180.1,362.5 L180.8,361.0 L181.5,363.3 L182.2,360.5 L182.9,361.3 L183.6,361.3 L184.3,362.3 L185.0,361.6 L185.7,362.5 L186.4,361.2 L187.1,363.2 L187.8,362.3 L188.5,362.5 L189.2,360.2 L189.9,361.4 L190.6,362.6 L191.3,359.4 L192.0,363.6 L192.7,360.1 L193.4,363.8 L194.1,361.9 L194.8,362.0 L195.5,360.6 L196.2,362.5 L196.9,363.3 L197.6,362.5 L198.3,363.7 L199.0,362.7 L199.7,363.0 L200.4,364.2 L201.1,362.4 L201.8,362.7 L202.5,363.2 L203.2,360.1 L203.9,363.3 L204.6,362.5 L205.3,363.6 L206.0,360.7 L206.7,362.1 L207.4,363.2 L208.1,362.6 L208.8,360.6 L209.5,362.1 L210.2,361.8 L210.9,360.5 L211.6,360.4 L212.3,362.5 L213.0,362.3 L213.7,364.2 L214.4,362.9 L215.1,362.8 L215.8,362.3 L216.5,361.3 L217.2,360.1 L217.9,363.9 L218.6,360.2 L219.3,363.5 L220.0,364.0 L220.7,359.9 L221.4,363.0 L222.1,363.5 L222.8,360.7 L223.5,363.5 L224.2,360.6 L224.9,360.2 L225.6,360.7 L226.3,360.2 L227.0,360.4 L227.7,361.1 L228.4,360.8 L229.1,360.2 L229.8,362.9 L230.5,363.5 L231.2,363.8 L231.9,363.4 L232.6,361.9 L233.3,357.9 L234.0,362.0 L234.7,361.1 L235.4,362.4 L236.1,359.8 L236.8,361.3 L237.5,363.9 L238.2,361.0 L238.9,362.6 L239.6,361.8 L240.3,358.4 L241.0,361.3 L241.7,360.2 L242.4,361.9 L243.1,360.6 L243.8,362.1 L244.5,361.6 L245.2,362.7 L245.9,362.2 L246.6,362.8 L247.3,359.7 L248.0,360.5 L248.7,362.6 L249.4,361.4 L250.1,358.9 L250.8,360.1 L251.5,348.5 L252.2,349.1 L252.9,345.5 L253.6,347.1 L254.3,346.4 L255.0,348.1 L255.7,348.1 L256.4,348.5 L257.1,349.0 L257.8,348.9 L258.5,349.8 L259.2,348.9 L259.9,351.6 L260.6,350.1 L261.3,352.7 L262.0,352.3 L262.7,352.6 L263.4,350.6 L264.1,354.4 L264.8,351.7 L265.5,351.5 L266.2,355.7 L266.9,353.4 L267.6,351.9 L268.3,354.6 L269.0,353.8 L269.7,358.9 L270.4,354.1 L271.1,353.0 L271.8,353.7 L272.5,357.6 L273.2,356.8 L273.9,357.2 L274.6,354.8 L275.3,354.6 L276.0,358.2 L276.7,355.6 L277.4,354.7 L278.1,354.7 L278.8,357.8 L279.5,355.7 L280.2,358.0 L280.9,358.8 L281.6,357.5 L282.3,358.2 L283.0,358.0 L283.7,359.4 L284.4,358.5 L285.1,357.5 L285.8,358.7 L286.5,356.3 L287.2,358.1 L287.9,360.4 L288.6,357.7 L289.3,359.4 L290.0,356.6 L290.7,358.4 L291.4,359.2 L292.1,359.5 L292.8,358.6 L293.5,357.8 L294.2,361.4 L294.9,359.6 L295.6,358.0 L296.3,361.4 L297.0,358.1 L297.7,359.3 L298.4,358.1 L299.1,358.9 L299.8,360.4 L300.5,359.6 L301.2,361.2 L301.9,358.0 L302.6,359.5 L303.3,360.2 L304.0,361.1 L304.7,354.5 L305.4,344.7 L306.1,353.3 L306.8,359.8 L307.5,358.6 L308.2,360.5 L308.9,361.8 L309.6,361.9 L310.3,361.1 L311.0,361.0 L311.7,358.8 L312.4,361.2 L313.1,360.1 L313.8,362.2 L314.5,361.4 L315.2,359.6 L315.9,359.2 L316.6,360.6 L317.3,359.7 L318.0,359.0 L318.7,359.6 L319.4,363.6 L320.1,362.5 L320.8,363.1 L321.5,359.5 L322.2,359.2 L322.9,363.2 L323.6,361.7 L324.3,359.3 L325.0,361.1 L325.7,359.4 L326.4,362.0 L327.1,363.0 L327.8,359.4 L328.5,363.7 L329.2,362.4 L329.9,360.0 L330.6,363.8 L331.3,361.0 L332.0,359.8 L332.7,363.6 L333.4,360.1 L334.1,363.0 L334.8,361.0 L335.5,363.0 L336.2,364.0 L336.9,363.8 L337.6,364.0 L338.3,364.6 L339.0,361.0 L339.7,363.8 L340.4,361.0 L341.1,364.3 L341.8,364.5 L342.5,361.3 L343.2,363.1 L343.9,361.5 L344.6,362.4 L345.3,364.2 L346.0,362.1 L346.7,364.6 L347.4,364.1 L348.1,364.6 L348.8,361.6 L349.5,364.6 L350.2,363.9 L350.9,364.8 L351.6,365.1 L352.3,362.4 L353.0,363.2 L353.7,364.2 L354.4,363.7 L355.1,360.9 L355.8,364.9 L356.5,361.3 L357.2,362.1 L357.9,358.7 L358.6,363.7 L359.3,365.2 L360.0,362.8 L360.7,363.2 L361.4,364.1 L362.1,364.4 L362.8,361.6 L363.5,364.1 L364.2,364.5 L364.9,362.7 L365.6,363.9 L366.3,361.6 L367.0,362.1 L367.7,364.4 L368.4,362.8 L369.1,364.3 L369.8,363.1 L370.5,360.7 L371.2,364.4 L371.9,362.3 L372.6,363.2 L373.3,360.7 L374.0,363.6 L374.7,361.2 L375.4,362.3 L376.1,363.7 L376.8,360.6 L377.5,362.7 L378.2,362.5 L378.9,363.8 L379.6,359.9 L380.3,361.8 L381.0,358.5 L381.7,363.0 L382.4,363.6 L383.1,362.5 L383.8,360.9 L384.5,363.9 L385.2,361.4 L385.9,360.9 L386.6,360.1 L387.3,363.7 L388.0,361.8 L388.7,362.7 L389.4,362.1 L390.1,361.3 L390.8,363.3 L391.5,360.6 L392.2,360.3 L392.9,362.2 L393.6,360.2 L394.3,362.1 L395.0,360.5 L395.7,362.8 L396.4,362.0 L397.1,360.3 L397.8,360.3 L398.5,363.6 L399.2,359.7 L399.9,362.8 L400.6,361.1 L401.3,361.5 L402.0,362.0 L402.7,363.8 L403.4,359.6 L404.1,359.8 L404.8,360.3 L405.5,358.8 L406.2,362.7 L406.9,362.7 L407.6,359.8 L408.3,362.8 L409.0,362.0 L409.7,362.6 L410.4,361.0 L411.1,361.3 L411.8,361.6 L412.5,361.8 L413.2,363.2 L413.9,363.3 L414.6,362.1 L415.3,362.8 L416.0,361.5 L416.7,361.2 L417.4,361.0 L418.1,360.8 L418.8,361.5 L419.5,361.8 L420.2,362.8 L420.9,361.6 L421.6,361.9 L422.3,360.1 L423.0,361.4 L423.7,362.6 L424.4,362.6 L425.1,363.2 L425.8,360.1 L426.5,363.6 L427.2,362.0 L427.9,363.4 L428.6,359.7 L429.3,363.2 L430.0,362.3 L430.7,361.2 L431.4,360.3 L432.1,360.6 L432.8,360.6 L433.5,360.4 L434.2,359.9 L434.9,358.1 L435.6,361.3 L436.3,359.7 L437.0,362.1 L437.7,360.1 L438.4,362.2 L439.1,361.9 L439.8,362.6 L440.5,361.5 L441.2,362.5 L441.9,360.2 L442.6,361.9 L443.3,362.6 L444.0,361.4 L444.7,363.5 L445.4,362.5 L446.1,360.2 L446.8,363.0 L447.5,362.3 L448.2,361.4 L448.9,359.8 L449.6,361.5 L450.3,361.6 L451.0,360.9 L451.7,362.3 L452.4,362.4 L453.1,360.9 L453.8,363.5 L454.5,362.1 L455.2,361.4 " fill="none" stroke="#FF00FF" stroke-width="1.3" stroke-linejoin="miter"/>
</svg>
<!-- axis labels chart1 -->
<div class="a r t" style="left:13.3px;top:123.5px;width:28px">200</div>
<div class="a r t" style="left:13.3px;top:150.5px;width:28px">160</div>
<div class="a r t" style="left:13.3px;top:177.5px;width:28px">120</div>
<div class="a r t" style="left:13.3px;top:204.5px;width:28px">80</div>
<div class="a r t" style="left:13.3px;top:230.5px;width:28px">40</div>
<div class="a t" style="left:470.7px;top:123.8px">20</div>
<div class="a t" style="left:470.7px;top:150.8px">16</div>
<div class="a t" style="left:470.7px;top:177.8px">12</div>
<div class="a t" style="left:470.7px;top:204.8px">8</div>
<div class="a t" style="left:470.7px;top:230.8px">4</div>
<!-- axis labels chart2 -->
<div class="a r t" style="left:13.3px;top:286.5px;width:28px">10</div>
<div class="a r t" style="left:13.3px;top:313.5px;width:28px">8</div>
<div class="a r t" style="left:13.3px;top:339.5px;width:28px">6</div>
<div class="a r t" style="left:13.3px;top:366.5px;width:28px">4</div>
<div class="a r t" style="left:13.3px;top:392.5px;width:28px">2</div>
<div class="a t" style="left:470.7px;top:286.8px">20</div>
<div class="a t" style="left:470.7px;top:313.8px">16</div>
<div class="a t" style="left:470.7px;top:339.8px">12</div>
<div class="a t" style="left:470.7px;top:366.8px">8</div>
<div class="a t" style="left:470.7px;top:392.8px">4</div>
<div class="a t" style="left:35px;top:267.8px;width:30px;text-align:center">0.0</div>
<div class="a t" style="left:87px;top:267.8px;width:30px;text-align:center">1.0</div>
<div class="a t" style="left:139px;top:267.8px;width:30px;text-align:center">2.0</div>
<div class="a t" style="left:191px;top:267.8px;width:30px;text-align:center">3.0</div>
<div class="a t" style="left:244px;top:267.8px;width:30px;text-align:center">4.0</div>
<div class="a t" style="left:296px;top:267.8px;width:30px;text-align:center">5.0</div>
<div class="a t" style="left:348px;top:267.8px;width:30px;text-align:center">6.0</div>
<div class="a t" style="left:401px;top:267.8px;width:30px;text-align:center">7.0</div>
<div class="a t" style="left:453px;top:267.8px;width:30px;text-align:center">8.0</div>
<div class="a t" style="left:35px;top:430.8px;width:30px;text-align:center">0.0</div>
<div class="a t" style="left:87px;top:430.8px;width:30px;text-align:center">1.0</div>
<div class="a t" style="left:139px;top:430.8px;width:30px;text-align:center">2.0</div>
<div class="a t" style="left:191px;top:430.8px;width:30px;text-align:center">3.0</div>
<div class="a t" style="left:244px;top:430.8px;width:30px;text-align:center">4.0</div>
<div class="a t" style="left:296px;top:430.8px;width:30px;text-align:center">5.0</div>
<div class="a t" style="left:348px;top:430.8px;width:30px;text-align:center">6.0</div>
<div class="a t" style="left:401px;top:430.8px;width:30px;text-align:center">7.0</div>
<div class="a t" style="left:453px;top:430.8px;width:30px;text-align:center">8.0</div>

<!-- Disc info -->
<div class="a grp" style="left:491px;top:124px;width:139px;height:84px"></div>
<div class="a glab t" style="letter-spacing:-0.22px;left:498.7px;top:119px">Disc info</div>
<div class="a t" style="left:499.3px;top:134.6px">Type:</div><div class="a v t" style="left:545px;top:134.6px">DVD+R DL</div>
<div class="a t" style="left:499.3px;top:151px">ID:</div><div class="a v t" style="left:545px;top:151px">MKM 003</div>
<div class="a t" style="left:499.3px;top:169px">Date:</div><div class="a v t" style="left:545px;top:169px">16 Dec 2006</div>
<div class="a t" style="left:499.3px;top:187px">Label:</div><div class="a v t" style="left:545px;top:187px">New</div>
<!-- Settings -->
<div class="a grp" style="left:491px;top:216px;width:139px;height:203px"></div>
<div class="a glab t" style="letter-spacing:-0.32px;left:498.6px;top:210.8px">Settings</div>
<div class="a sunk" style="left:500px;top:225px;width:84px;height:21px"></div>
<div class="a t" style="left:505px;top:229.9px">8</div>
<svg class="a" style="left:511.5px;top:231px" width="10" height="10" viewBox="0 0 10 10"><path d="M0.8,0.6 L8.8,9.2 M8.8,0.6 L0.8,9.2" stroke="#000" stroke-width="1.05" fill="none"/></svg>
<div class="a btn" style="left:566px;top:227px;width:16px;height:17px"><div class="a" style="left:3px;top:5px;width:0;height:0;border:4px solid transparent;border-top-color:#000;border-bottom-width:0"></div></div>
<div class="a btn" style="left:592px;top:224px;width:23px;height:23px"></div>
<svg class="a" style="left:595px;top:226px" width="17" height="19" viewBox="0 0 17 19"><rect x="1.5" y="1.5" width="13" height="15" fill="#FFFFFF" stroke="#000" stroke-width="1.3"/>
<path d="M4.4,8.8 V6.4 Q4.4,5.6 5.2,5.6 H8" fill="none" stroke="#008000" stroke-width="1.2"/><polygon points="7.3,2.9 10.3,5.6 7.3,8.2" fill="#008000"/>
<path d="M11.6,9.2 V11.7 Q11.6,12.5 10.8,12.5 H8" fill="none" stroke="#008000" stroke-width="1.2"/><polygon points="8.7,9.9 5.7,12.5 8.7,15.2" fill="#008000"/></svg>
<div class="a t" style="letter-spacing:-0.38px;left:502.4px;top:257px">Start:</div>
<div class="a sunk" style="left:554px;top:251px;width:60px;height:21px"></div><div class="a t" style="letter-spacing:-0.40px;left:558px;top:255px">0000 MB</div>
<div class="a t" style="left:502.4px;top:280px">End:</div>
<div class="a sunk" style="left:554px;top:274px;width:60px;height:21px"></div><div class="a t" style="letter-spacing:-0.40px;left:558px;top:278px">8000 MB</div>
<div class="a sunk cb" style="left:502px;top:296px;background:#fff"></div><div class="a t" style="left:520px;top:296.9px;">Quick scan</div>
<div class="a sunk cb" style="left:502px;top:314px;background:#fff"></div><svg class="a" style="left:505px;top:317px" width="7" height="7" viewBox="0 0 7 7" shape-rendering="crispEdges"><rect x="6" y="0" width="1" height="1" fill="#000"/><rect x="5" y="1" width="2" height="1" fill="#000"/><rect x="0" y="2" width="1" height="1" fill="#000"/><rect x="4" y="2" width="3" height="1" fill="#000"/><rect x="0" y="3" width="2" height="1" fill="#000"/><rect x="3" y="3" width="3" height="1" fill="#000"/><rect x="0" y="4" width="5" height="1" fill="#000"/><rect x="1" y="5" width="3" height="1" fill="#000"/><rect x="2" y="6" width="1" height="1" fill="#000"/></svg><div class="a t" style="letter-spacing:-0.16px;left:520px;top:314.9px;">Show C1/PIE</div>
<div class="a sunk cb" style="left:502px;top:329px;background:#fff"></div><svg class="a" style="left:505px;top:332px" width="7" height="7" viewBox="0 0 7 7" shape-rendering="crispEdges"><rect x="6" y="0" width="1" height="1" fill="#000"/><rect x="5" y="1" width="2" height="1" fill="#000"/><rect x="0" y="2" width="1" height="1" fill="#000"/><rect x="4" y="2" width="3" height="1" fill="#000"/><rect x="0" y="3" width="2" height="1" fill="#000"/><rect x="3" y="3" width="3" height="1" fill="#000"/><rect x="0" y="4" width="5" height="1" fill="#000"/><rect x="1" y="5" width="3" height="1" fill="#000"/><rect x="2" y="6" width="1" height="1" fill="#000"/></svg><div class="a t" style="letter-spacing:-0.10px;left:520px;top:329.9px;">Show C2/PIF</div>
<div class="a sunk cb" style="left:502px;top:345px;background:#fff"></div><svg class="a" style="left:505px;top:348px" width="7" height="7" viewBox="0 0 7 7" shape-rendering="crispEdges"><rect x="6" y="0" width="1" height="1" fill="#000"/><rect x="5" y="1" width="2" height="1" fill="#000"/><rect x="0" y="2" width="1" height="1" fill="#000"/><rect x="4" y="2" width="3" height="1" fill="#000"/><rect x="0" y="3" width="2" height="1" fill="#000"/><rect x="3" y="3" width="3" height="1" fill="#000"/><rect x="0" y="4" width="5" height="1" fill="#000"/><rect x="1" y="5" width="3" height="1" fill="#000"/><rect x="2" y="6" width="1" height="1" fill="#000"/></svg><div class="a t" style="letter-spacing:-0.24px;left:520px;top:345.9px;">Show jitter</div>
<div class="a sunk cb" style="left:502px;top:361px;background:#fff"></div><svg class="a" style="left:505px;top:364px" width="7" height="7" viewBox="0 0 7 7" shape-rendering="crispEdges"><rect x="6" y="0" width="1" height="1" fill="#000"/><rect x="5" y="1" width="2" height="1" fill="#000"/><rect x="0" y="2" width="1" height="1" fill="#000"/><rect x="4" y="2" width="3" height="1" fill="#000"/><rect x="0" y="3" width="2" height="1" fill="#000"/><rect x="3" y="3" width="3" height="1" fill="#000"/><rect x="0" y="4" width="5" height="1" fill="#000"/><rect x="1" y="5" width="3" height="1" fill="#000"/><rect x="2" y="6" width="1" height="1" fill="#000"/></svg><div class="a t" style="letter-spacing:-0.18px;left:520px;top:361.9px;">Show read speed</div>
<div class="a sunk cb" style="left:502px;top:376px;background:#D4D0C8"></div><svg class="a" style="left:505px;top:379px" width="7" height="7" viewBox="0 0 7 7" shape-rendering="crispEdges"><rect x="6" y="0" width="1" height="1" fill="#808080"/><rect x="5" y="1" width="2" height="1" fill="#808080"/><rect x="0" y="2" width="1" height="1" fill="#808080"/><rect x="4" y="2" width="3" height="1" fill="#808080"/><rect x="0" y="3" width="2" height="1" fill="#808080"/><rect x="3" y="3" width="3" height="1" fill="#808080"/><rect x="0" y="4" width="5" height="1" fill="#808080"/><rect x="1" y="5" width="3" height="1" fill="#808080"/><rect x="2" y="6" width="1" height="1" fill="#808080"/></svg><div class="a t" style="letter-spacing:-0.20px;left:520px;top:376.9px;color:#808080;text-shadow:1px 1px 0 #fff;">Show write speed</div>

<div class="a btn" style="left:550px;top:392px;width:76px;height:24px;line-height:21px"><span class="t">Advanced</span></div>
<!-- Quality -->
<div class="a grp" style="left:491px;top:425px;width:139px;height:26px"></div>
<div class="a t" style="letter-spacing:-0.34px;left:502px;top:433px">Quality score:</div><div class="a v r t" style="left:579.3px;top:433px;width:41px">94</div>
<!-- Progress -->
<div class="a grp" style="left:491px;top:457px;width:139px;height:56px"></div>
<svg class="a" style="left:575px;top:460px" width="70" height="63" viewBox="0 0 70 63">
<defs><linearGradient id="cdg" x1="0" y1="1" x2="1" y2="0"><stop offset="0" stop-color="#BDBAB3"/><stop offset="0.5" stop-color="#CDCAC3"/><stop offset="1" stop-color="#E0DDD6"/></linearGradient>
<filter id="bl" x="-10%" y="-10%" width="120%" height="120%"><feGaussianBlur stdDeviation="0.6"/></filter></defs>
<g filter="url(#bl)"><circle cx="24.6" cy="23.3" r="18.8" fill="url(#cdg)"/><circle cx="24.6" cy="23.3" r="18.2" fill="none" stroke="#B9B6AF" stroke-width="1.2"/>
<path d="M24.6,23.3 L10.5,10.5 A19 19 0 0 1 21,4.6 Z" fill="#DEDBD4" opacity="0.9"/><path d="M24.6,23.3 L38.5,36 A19 19 0 0 1 28,42 Z" fill="#DAD7D0" opacity="0.7"/>
<circle cx="24.6" cy="23.3" r="6.6" fill="#DAD7D0" stroke="#BEBBB4" stroke-width="1.2"/><circle cx="24.6" cy="23.3" r="2.8" fill="#E4E1DA" stroke="#C2BFB8" stroke-width="1"/></g>
</svg>
<div class="a" style="left:560.5px;top:505px;font-weight:bold;font-size:17px;color:rgba(255,255,255,0.34);letter-spacing:-0.2px;line-height:20px;transform:scaleX(0.665);transform-origin:0 0">CDRLABS.COM</div>
<div class="a t" style="letter-spacing:-0.54px;left:502px;top:467px">Progress:</div><div class="a v r t" style="letter-spacing:-0.66px;left:570px;top:467px;width:51px">100 %</div>
<div class="a t" style="letter-spacing:-0.36px;left:502px;top:483.2px">Position:</div><div class="a v r t" style="letter-spacing:-0.35px;left:569.6px;top:483.2px;width:51px">7999 MB</div>
<div class="a t" style="letter-spacing:-0.31px;left:502px;top:497.8px">Speed:</div><div class="a v r t" style="letter-spacing:-0.19px;left:570.4px;top:497.8px;width:51px">3.35 X</div>
<!-- bottom groups -->
<div class="a grp" style="left:14px;top:457px;width:146px;height:57px"></div>
<div class="a glab" style="left:20.5px;top:451px;width:15.5px;height:13px"></div><div class="a glab t" style="letter-spacing:-0.49px;left:34px;top:451.5px">PI Errors</div><div class="a sw" style="left:23.5px;top:453.5px;background:#00FFFF"></div>
<div class="a t" style="letter-spacing:-0.20px;left:22px;top:468px">Average:</div><div class="a v r t" style="left:90.4px;top:468px;width:60px">27.84</div>
<div class="a t" style="letter-spacing:-0.54px;left:22px;top:483.5px">Maximum:</div><div class="a v r t" style="left:90.4px;top:483.5px;width:60px">105</div>
<div class="a t" style="letter-spacing:-0.05px;left:22px;top:498.3px">Total:</div><div class="a v r t" style="left:90.4px;top:498.3px;width:60px">744360</div>
<div class="a grp" style="left:172px;top:457px;width:146px;height:57px"></div>
<div class="a glab" style="left:179px;top:451px;width:14.5px;height:13px"></div><div class="a glab t" style="letter-spacing:-0.38px;left:191.5px;top:451.5px">PI Failures</div><div class="a sw" style="left:182px;top:453.5px;background:#FFFF00"></div>
<div class="a t" style="letter-spacing:-0.20px;left:181px;top:468px">Average:</div><div class="a v r t" style="left:249.60000000000002px;top:468px;width:60px">0.14</div>
<div class="a t" style="letter-spacing:-0.54px;left:181px;top:483.5px">Maximum:</div><div class="a v r t" style="left:249.60000000000002px;top:483.5px;width:60px">10</div>
<div class="a t" style="letter-spacing:-0.05px;left:181px;top:498.3px">Total:</div><div class="a v r t" style="left:249.60000000000002px;top:498.3px;width:60px">2638</div>
<div class="a grp" style="left:331px;top:457px;width:147px;height:43px"></div>
<div class="a glab" style="left:338px;top:451px;width:13.800000000000011px;height:13px"></div><div class="a glab t" style="letter-spacing:-0.31px;left:349.8px;top:451.5px">Jitter</div><div class="a sw" style="left:341px;top:453.5px;background:#FF00FF"></div>
<div class="a t" style="letter-spacing:-0.20px;left:340.3px;top:468px">Average:</div><div class="a v r t" style="left:408.6px;top:468px;width:60px">9.36 %</div>
<div class="a t" style="letter-spacing:-0.54px;left:340.3px;top:483.5px">Maximum:</div><div class="a v r t" style="left:408.6px;top:483.5px;width:60px">12.4 %</div>
<div class="a t" style="letter-spacing:-0.46px;left:340.5px;top:501.5px">PO failures:</div><div class="a v r t" style="left:408.6px;top:501.5px;width:60px">0</div>
</body></html>
